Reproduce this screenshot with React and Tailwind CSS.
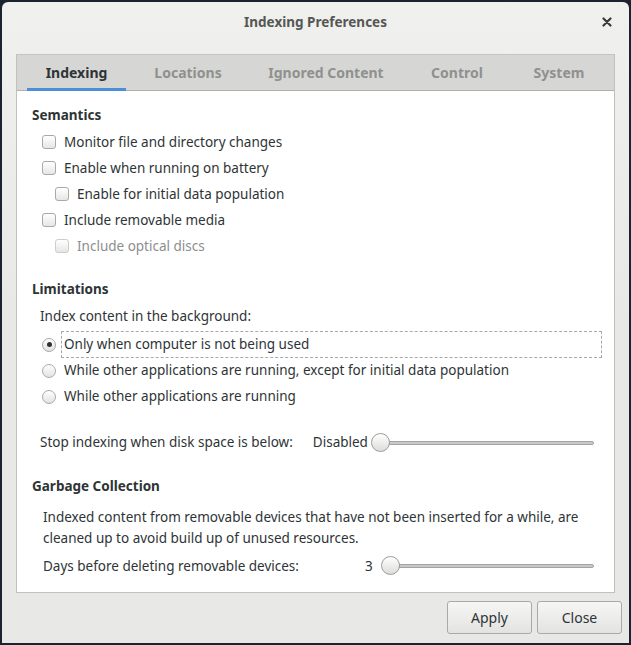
import React from 'react';

const font = { fontFamily: '"Noto Sans", "DejaVu Sans", sans-serif' };

const tabs = [
  { label: 'Indexing', cls: 'ml-[10px] w-[99px]', active: true },
  { label: 'Locations', cls: 'ml-[10px] w-[104px]' },
  { label: 'Ignored Content', cls: 'ml-[21px] w-[130px]' },
  { label: 'Control', cls: 'ml-[20px] w-[92px]' },
  { label: 'System', cls: 'ml-[13px] w-[86px]' },
];

const Check = ({ label, nested, disabled }) => (
  <div className={`flex items-center h-[26px] ${nested ? 'pl-[23px]' : 'pl-[10px]'}`}>
    <span
      className={`w-[14px] h-[14px] rounded-[3px] border bg-gradient-to-b from-white to-[#e6e6e5] ${
        disabled ? 'border-[#cdcdcc]' : 'border-[#a9aaa7]'
      }`}
    />
    <span className={`ml-[8px] ${disabled ? 'text-[#8b8e8f]' : 'text-[#2e3436]'}`}>{label}</span>
  </div>
);

const Radio = ({ label, checked }) => (
  <div className="flex items-center h-[26px] pl-[10px]">
    <span className="w-[14px] h-[14px] rounded-full border border-[#a9aaa7] bg-gradient-to-b from-white to-[#e2e2e1] flex items-center justify-center">
      {checked && <span className="w-[5px] h-[5px] rounded-full bg-[#2e3436]" />}
    </span>
    <span
      className={`ml-[5px] px-[2px] py-[2px] ${
        checked ? 'flex-1 mr-[12px] border border-dashed border-[#a8a8a8]' : 'border border-transparent'
      }`}
    >
      {label}
    </span>
  </div>
);

const Slider = () => (
  <div className="flex-1 flex items-center">
    <span className="w-[19px] h-[19px] rounded-full border border-[#9c9d9a] bg-gradient-to-b from-white to-[#dcdcdb] shrink-0 z-10" />
    <span className="flex-1 h-[4px] -ml-[1px] rounded-r-full border border-[#a4a5a2] bg-[#c8c8c7]" />
  </div>
);

export default function App() {
  return (
    <div className="w-[631px] h-[645px] bg-[#1b2230] p-[2px] text-[13.5px] text-[#2e3436]" style={font}>
      <div className="h-full rounded-t-[6px] bg-gradient-to-b from-[#f0f0ef] via-[#e8e8e7] to-[#e8e8e7] flex flex-col">
        <div className="relative h-[40px] flex items-center justify-center">
          <span className="font-bold text-[13.5px] text-[#555753]">Indexing Preferences</span>
          <svg className="absolute right-[17px] top-[15px]" width="10" height="10" viewBox="0 0 10 10">
            <path d="M1.5 1.5L8.5 8.5M8.5 1.5L1.5 8.5" stroke="#3a3a3a" strokeWidth="2.2" strokeLinecap="round" />
          </svg>
        </div>

        <div className="mx-[14px] mt-[12px] flex-1 flex flex-col border border-[#c0c0bd] border-t-0">
          <div className="h-[37px] bg-[#d6d6d5] flex items-end border-b border-[#b0b0ad] border-t border-t-[#c4c4c2]">
            {tabs.map((t) => (
              <div
                key={t.label}
                className={`${t.cls} h-full flex items-center justify-center font-bold text-[14px] border-b-[3px] -mb-[1px] ${
                  t.active ? 'text-[#2e3436] border-[#4a90d9]' : 'text-[#8f918d] border-transparent'
                }`}
              >
                {t.label}
              </div>
            ))}
          </div>

          <div className="flex-1 bg-white pl-[15px] pt-[14px]">
            <div className="font-bold">Semantics</div>
            <div className="mt-[4px]">
              <Check label="Monitor file and directory changes" />
              <Check label="Enable when running on battery" />
              <Check label="Enable for initial data population" nested />
              <Check label="Include removable media" />
              <Check label="Include optical discs" nested disabled />
            </div>

            <div className="font-bold mt-[20px]">Limitations</div>
            <div className="pl-[8px] mt-[7px] h-[20px] flex items-center">Index content in the background:</div>
            <div className="mt-[5px]">
              <Radio label="Only when computer is not being used" checked />
              <Radio label="While other applications are running, except for initial data population" />
              <Radio label="While other applications are running" />
            </div>

            <div className="flex items-center pl-[8px] mt-[22px] mr-[20px] h-[22px]">
              <span>Stop indexing when disk space is below:</span>
              <span className="ml-[20px] mr-[3px]">Disabled</span>
              <Slider />
            </div>

            <div className="font-bold mt-[22px]">Garbage Collection</div>
            <div className="pl-[11px] mt-[11px] leading-[21px] pr-[20px]">
              Indexed content from removable devices that have not been inserted for a while, are cleaned up to avoid build up of unused resources.
            </div>
            <div className="flex items-center pl-[11px] mt-[6px] mr-[20px] h-[22px]">
              <span className="w-[322px]">Days before deleting removable devices:</span>
              <span className="mr-[8px]">3</span>
              <Slider />
            </div>
          </div>
        </div>

        <div className="h-[50px] flex items-start justify-end gap-[5px] pr-[7px] pt-[8px]">
          {['Apply', 'Close'].map((b) => (
            <button
              key={b}
              className="w-[85px] h-[33px] rounded-[3px] border border-[#a9aaa7] bg-gradient-to-b from-[#f6f6f5] to-[#e3e3e2] text-[14px] text-[#2e3436]"
            >
              {b}
            </button>
          ))}
        </div>
      </div>
    </div>
  );
}
